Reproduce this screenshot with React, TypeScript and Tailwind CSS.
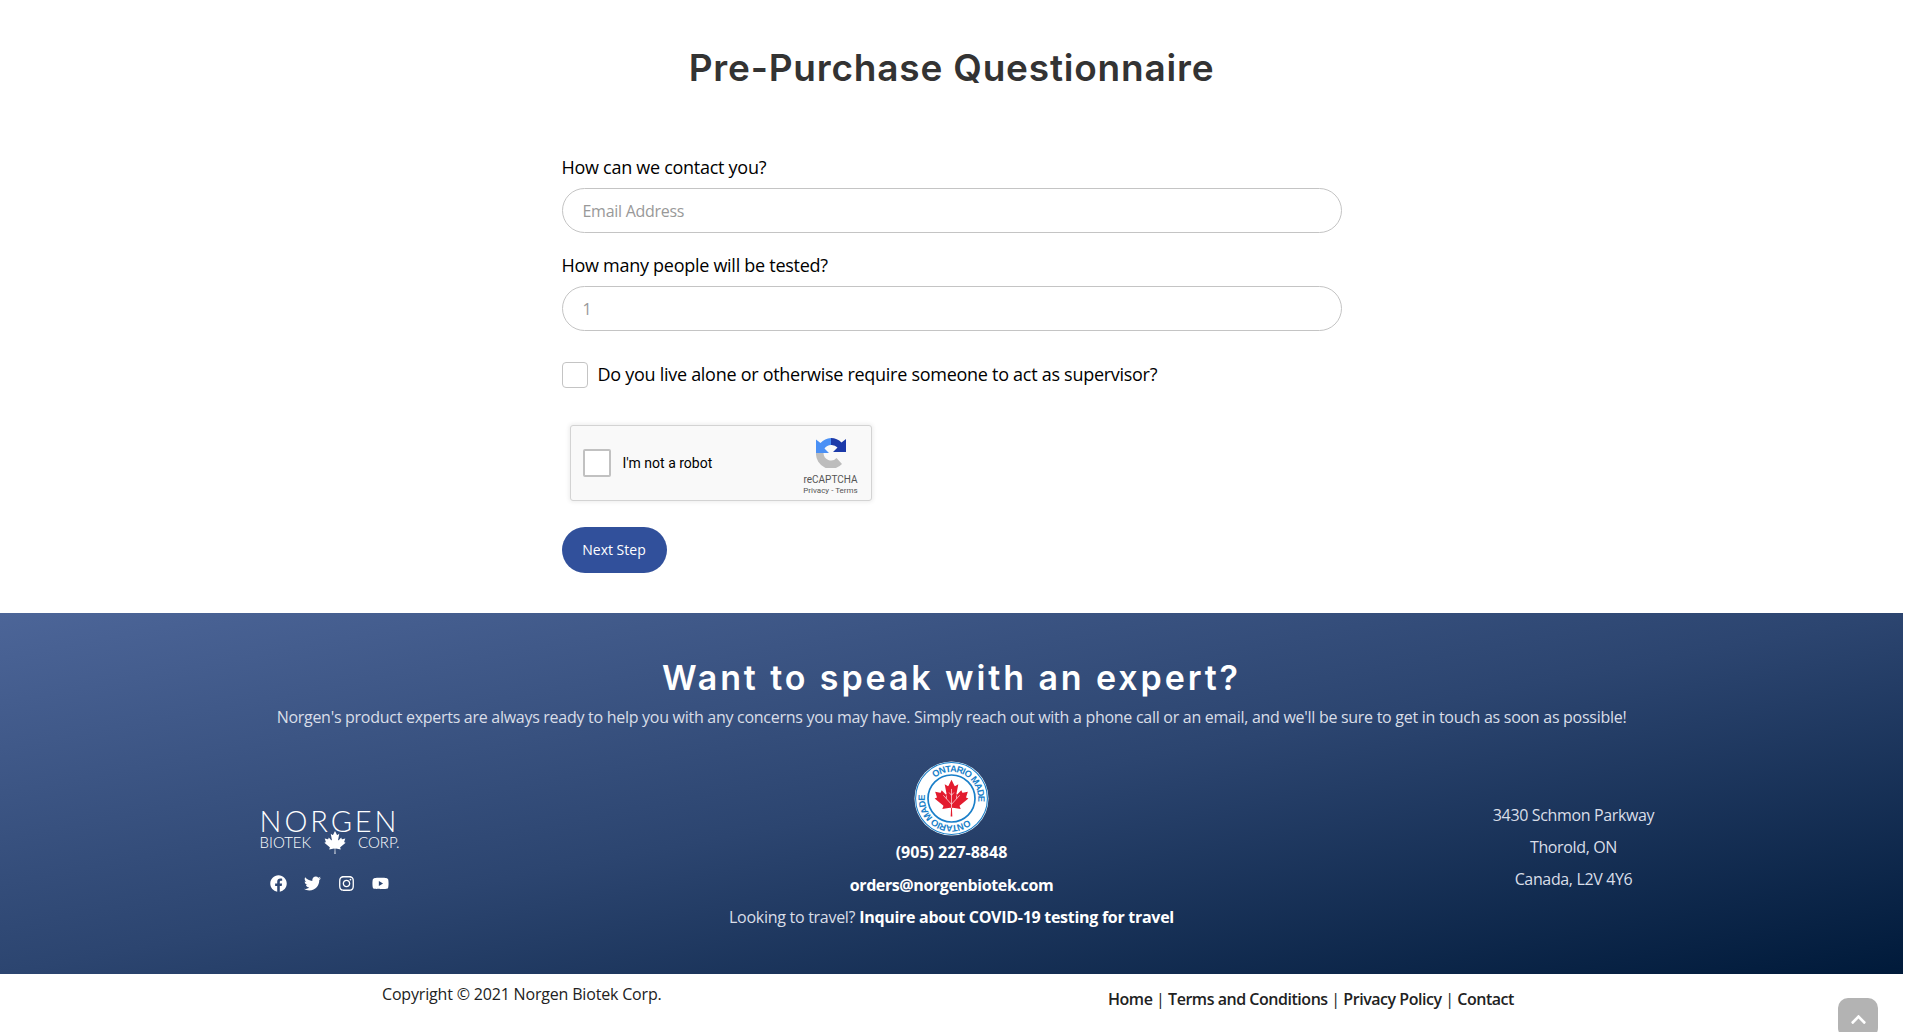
import { FaFacebook, FaTwitter, FaInstagram, FaYoutube, FaChevronUp } from "react-icons/fa";

const LEAF =
  "m-90 2030 45-863a95 95 0 0 0-111-98l-859 151 116-320a65 65 0 0 0-20-73l-941-762 212-99a65 65 0 0 0 34-79l-186-572 542 115a65 65 0 0 0 73-38l105-247 423 454a65 65 0 0 0 111-57l-204-1052 327 189a65 65 0 0 0 91-27l332-652 332 652a65 65 0 0 0 91 27l327-189-204 1052a65 65 0 0 0 111 57l423-454 105 247a65 65 0 0 0 73 38l542-115-186 572a65 65 0 0 0 34 79l212 99-941 762a65 65 0 0 0-20 73l116 320-859-151a95 95 0 0 0-111 98l45 863z";

function Field({ label, placeholder }: { label: string; placeholder: string }) {
  return (
    <div className="flex flex-col">
      <label className="mb-[7px] text-[18px] leading-[27px] text-black">{label}</label>
      <input
        readOnly
        placeholder={placeholder}
        className="h-[45px] w-full rounded-full border border-[#c4c4c4] bg-white px-[20px] text-[16px] outline-none placeholder:text-[#999]"
      />
    </div>
  );
}

function Recaptcha() {
  return (
    <div className="ml-[8px] mt-[37px] flex h-[76px] w-[302px] items-center rounded-[3px] border border-[#d3d3d3] bg-[#f9f9f9] tracking-normal shadow-[0_0_4px_1px_rgba(0,0,0,0.08)] font-['Roboto',sans-serif]">
      <div className="ml-[12px] h-[28px] w-[28px] rounded-[2px] border-2 border-[#c1c1c1] bg-white" />
      <span className="ml-[12px] text-[14px] text-black">I'm not a robot</span>
      <div className="ml-auto mr-[12px] flex w-[56px] flex-col items-center self-start pt-[12px]">
        <svg viewBox="0 0 30 30" className="h-[30px] w-[30px]">
          <path d="M0 15 H7.5 A7.5 7.5 0 0 0 20.5 20 L26 26 A15 15 0 0 1 0 15 Z" fill="#bdbdbd" />
          <path d="M15 0 V7 A8 8 0 0 0 8.5 10.5 L13 15 H0 V1.5 L4.5 5 A15 15 0 0 1 15 0 Z" fill="#4a90f5" />
          <path d="M15 0 A15 15 0 0 1 25.5 4.5 L30 1 V14 H17 L21.5 9.5 A8 8 0 0 0 15 7 Z" fill="#1c3aa9" />
        </svg>
        <span className="mt-[6px] text-[10px] leading-[12px] text-[#555]">reCAPTCHA</span>
        <span className="whitespace-nowrap text-[8px] leading-[10px] text-[#555]">Privacy - Terms</span>
      </div>
    </div>
  );
}

function Logo() {
  return (
    <div className="flex w-[140px] flex-col font-['Lato',sans-serif] font-light tracking-normal text-white">
      <div className="mt-[5px] text-center text-[29px] leading-[25px] tracking-[2.9px]">NORGEN</div>
      <div className="flex items-center justify-between text-[15px] leading-[19px]">
        <span>BIOTEK</span>
        <svg viewBox="-2015 -2000 4030 4030" className="my-[-2px] h-[23px] w-[24px]">
          <path d={LEAF} fill="#ffffff" />
        </svg>
        <span>CORP.</span>
      </div>
    </div>
  );
}

function Badge() {
  const text = { fontSize: 9.4, fontWeight: 700, fill: "#1a7fc9", fontFamily: "Liberation Sans, sans-serif" };
  return (
    <svg viewBox="0 0 76 76" className="h-[75px] w-[75px]">
      <circle cx="38" cy="38" r="37.5" fill="#ffffff" />
      <circle cx="38" cy="38" r="36.4" fill="none" stroke="#1a7fc9" strokeWidth="1.1" />
      <circle cx="38" cy="38" r="23.8" fill="none" stroke="#1a7fc9" strokeWidth="1.7" />
      <defs>
        <path id="ring" d="M 38 11 A 27 27 0 1 1 37.99 11" />
      </defs>
      <g transform="rotate(-39 38 38)">
        <text {...text}>
          <textPath href="#ring" startOffset="0" textLength="64" lengthAdjust="spacing">ONTARIO MADE</textPath>
        </text>
        <text {...text}>
          <textPath href="#ring" startOffset="84.8" textLength="64" lengthAdjust="spacing">ONTARIO MADE</textPath>
        </text>
      </g>
      <g transform="translate(38 37.5) scale(0.0092)">
        <path d={LEAF} fill="#e31b2e" />
        <path d="M0 1100 V-1000 M0 700 L-900 -300 M0 700 L900 -300 M-560 80 V-280 M560 80 V-280 M0 -300 L-260 -600 M0 -300 L260 -600" stroke="#ffffff" strokeWidth="70" fill="none" />
      </g>
    </svg>
  );
}

export default function App() {
  return (
    <div className="relative h-[1032px] w-[1903px] overflow-hidden bg-white font-['Open_Sans',sans-serif] tracking-[-0.28px]">
      <main className="mx-auto flex h-[613px] w-[780px] flex-col">
        <h1 className="mx-[-200px] mt-[44px] text-center font-['Inter',sans-serif] text-[37px] font-semibold leading-[48px] tracking-[0.8px] text-[#333]">
          Pre-Purchase Questionnaire
        </h1>
        <div className="mt-[62px] flex flex-col gap-[19px]">
          <Field label="How can we contact you?" placeholder="Email Address" />
          <Field label="How many people will be tested?" placeholder="1" />
        </div>
        <div className="mt-[30px] flex items-center gap-[10px]">
          <div className="h-[26px] w-[26px] rounded-[4px] border border-[#c4c4c4] bg-white" />
          <span className="text-[18px] leading-[27px] text-black">
            Do you live alone or otherwise require someone to act as supervisor?
          </span>
        </div>
        <Recaptcha />
        <button className="mt-[26px] h-[46px] w-[105px] rounded-full bg-[#31509b] pb-[2px] text-[14px] font-medium tracking-normal text-white">
          Next Step
        </button>
      </main>

      <footer className="flex h-[361px] flex-col items-center bg-[linear-gradient(to_bottom_right,#4c6598_0%,#2c4570_50%,#001a3a_100%)] text-[#d9dee8]">
        <h2 className="mt-[44px] font-['Inter',sans-serif] text-[34px] font-semibold leading-[42px] tracking-[2.9px] text-white">
          Want to speak with an expert?
        </h2>
        <p className="mt-[5px] text-[16px] leading-[26px]">
          Norgen's product experts are always ready to help you with any concerns you may have. Simply reach out with a phone call or an email, and we'll be sure to get in touch as soon as possible!
        </p>
        <div className="mt-[31px] grid w-[1866px] grid-cols-3 items-center">
          <div className="flex flex-col items-center">
            <Logo />
            <div className="mt-[23px] flex items-center gap-[17px] text-[17px] text-white">
              <FaFacebook />
              <FaTwitter />
              <FaInstagram />
              <FaYoutube />
            </div>
          </div>
          <div className="flex flex-col items-center text-[16px] leading-[32.5px]">
            <Badge />
            <a className="font-bold tracking-normal text-white">(905) 227-8848</a>
            <a className="font-bold tracking-[-0.4px] text-white">orders@norgenbiotek.com</a>
            <span className="whitespace-nowrap">
              Looking to travel? <a className="font-bold text-white">Inquire about COVID-19 testing for travel</a>
            </span>
          </div>
          <div className="flex flex-col items-center text-[16px] leading-[32px] tracking-[-0.36px]">
            <span>3430 Schmon Parkway</span>
            <span>Thorold, ON</span>
            <span>Canada, L2V 4Y6</span>
          </div>
        </div>
      </footer>

      <div className="relative h-[58px] text-[#222]">
        <div className="ml-[382px] flex items-start">
          <span className="mt-[8px] w-[726px] text-[16px] leading-[24px] tracking-[-0.18px]">Copyright © 2021 Norgen Biotek Corp.</span>
          <span className="mt-[13px] whitespace-nowrap text-[16px] leading-[24px] tracking-[-0.47px]">
            <b className="font-semibold">Home</b> | <b className="font-semibold">Terms and Conditions</b> | <b className="font-semibold">Privacy Policy</b> | <b className="font-semibold">Contact</b>
          </span>
        </div>
      </div>

      <div className="absolute left-[1838px] top-[998px] flex h-[40px] w-[40px] items-start justify-center rounded-[10px] bg-[#b3b3b3] pt-[13px] text-white">
        <FaChevronUp className="text-[17px]" />
      </div>
    </div>
  );
}
